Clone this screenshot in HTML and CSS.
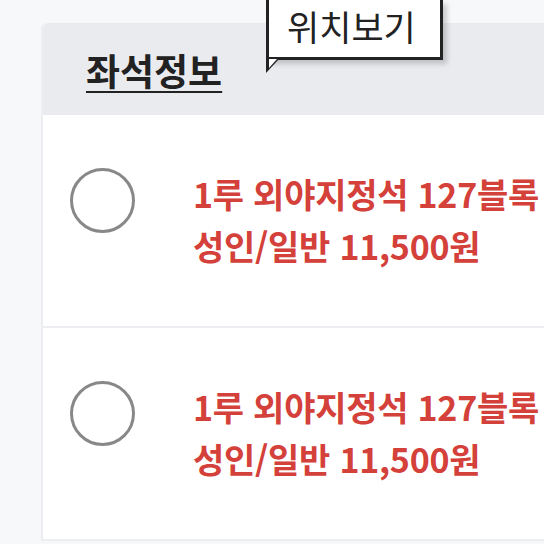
FILE: index.html
```html
<!DOCTYPE html>
<html lang="ko">
<head>
    <meta charset="UTF-8">
    <meta name="viewport" content="width=device-width, initial-scale=1.0">
    <title>좌석정보</title>
    <link rel="stylesheet" href="styles.css">
</head>
<body>
    <div class="page">
        <div class="card">
            <div class="card-head">
                <h2 class="title">좌석정보</h2>
                <div class="tip">위치보기</div>
            </div>

            <label class="seat">
                <input type="radio" name="seat" value="1">
                <span class="radio"></span>
                <span class="seat-info">
                    1루 외야지정석 127블록<br>
                    성인/일반 11,500원
                </span>
            </label>

            <label class="seat">
                <input type="radio" name="seat" value="2">
                <span class="radio"></span>
                <span class="seat-info">
                    1루 외야지정석 127블록<br>
                    성인/일반 11,500원
                </span>
            </label>
        </div>
    </div>
</body>
</html>
```

FILE: styles.css
```css
html, body {
    margin: 0;
    font-family: "Noto Sans CJK KR", "Noto Sans", sans-serif;
    background: #f7f8fa;
    overflow: hidden;
}
.page {
    padding: 23px 0 0 41px;
}
.card {
    width: 620px;
    background: #fff;
    border-left: 2px solid #eceef1;
    border-bottom: 2px solid #eceef1;
    border-top-left-radius: 5px;
}
.card-head {
    position: relative;
    height: 92px;
    background: #e9ebef;
    border-top-left-radius: 5px;
    padding-left: 43px;
    box-sizing: border-box;
}
.title {
    margin: 0;
    padding-top: 24px;
    font-size: 37px;
    font-weight: 700;
    line-height: 46px;
    color: #222;
    text-decoration: underline;
    text-decoration-thickness: 2px;
    text-underline-offset: 5px;
}

/* speech bubble over the header, top edge runs off the page */
.tip {
    position: absolute;
    left: 223px;
    top: -23px;
    width: 177px;
    height: 60px;
    padding: 5px 0 0 18px;
    box-sizing: border-box;
    border: 3px solid #222;
    border-top: none;
    background: #fff;
    font-size: 35px;
    line-height: 42px;
    color: #222;
    box-shadow: 4px 4px 5px rgba(0, 0, 0, 0.18);
}
.tip:after {
    content: "";
    position: absolute;
    left: -3px;
    bottom: -16px;
    width: 13px;
    height: 14px;
    background: #222;
    clip-path: polygon(0 0, 100% 0, 0 100%);
}
.tip:before {
    content: "";
    position: absolute;
    left: 0;
    bottom: -11px;
    width: 8px;
    height: 9px;
    background: #fff;
    z-index: 1;
    clip-path: polygon(0 0, 100% 0, 0 100%);
}

.seat {
    display: flex;
    align-items: flex-start;
    padding: 53px 0 54px 27px;
    border-top: 2px solid #eceef1;
    cursor: pointer;
}
.card-head + .seat {
    border-top: none;
}
.seat input {
    position: absolute;
    opacity: 0;
}
.radio {
    flex: none;
    width: 65px;
    height: 65px;
    box-sizing: border-box;
    border: 3px solid #888;
    border-radius: 50%;
    background: #fff;
}
.seat input:checked ~ .radio {
    border-color: #d5433b;
}
.seat-info {
    margin-left: 58px;
    font-size: 34px;
    font-weight: 700;
    line-height: 52px;
    color: #d4403a;
    white-space: nowrap;
    letter-spacing: -0.25px;
}
```
